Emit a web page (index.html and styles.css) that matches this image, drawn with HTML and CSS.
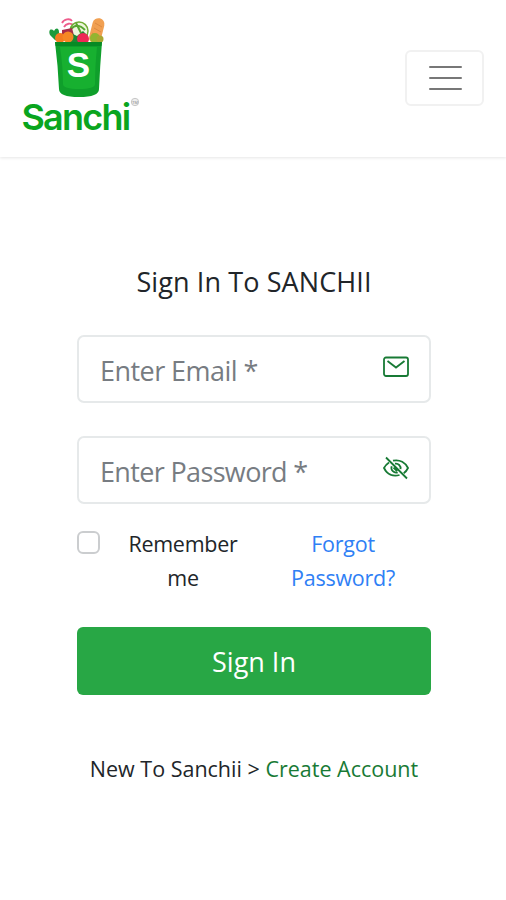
FILE: index.html
```
<!DOCTYPE html>
<html lang="en">
<head>
    <meta charset="UTF-8">
    <meta name="viewport" content="width=device-width, initial-scale=1">
    <title>Sign In</title>
    <link rel="stylesheet" href="styles.css">
</head>
<body>
<header class="navbar">
    <a href="#" class="logo">
        <svg width="122" height="130" viewBox="20 15 122 130">
            <!-- groceries -->
            <path d="M50 35c-2-5 1-7 4-4 2-4 5-3 5 1l1 10-5-2z" fill="#1d9a3c"/>
            <path d="M62 23c2-4 8-5 10-2M64 27c2-4 7-4 9-2" fill="none" stroke="#ee5c8c" stroke-width="1.8"/>
            <circle cx="79" cy="31" r="9" fill="#eef6dc" stroke="#72ad35" stroke-width="1.5"/>
            <path d="M71 29q6-7 14 1M76 23l5 10" fill="none" stroke="#58a632" stroke-width="2"/>
            <rect x="91" y="18" width="12" height="26" rx="6" transform="rotate(14 97 30)" fill="#f1a052"/>
            <path d="M95 23l7 4M94 28l7 4M92 33l7 4" stroke="#dd8a42" stroke-width="1"/>
            <path d="M62 30l10-2 3 11H62z" fill="#a92b48"/>
            <path d="M71 33l6 3 6-5 5 5-2 6H70z" fill="#1c8735"/>
            <circle cx="60" cy="38" r="5" fill="#f47b20"/>
            <circle cx="68" cy="37" r="5.500" fill="#f68725"/>
            <circle cx="83" cy="39" r="6" fill="#ee2856"/>
            <circle cx="95" cy="38" r="5" fill="#93b530"/>
            <circle cx="100" cy="39" r="3.500" fill="#a9a832"/>
            <!-- bag -->
            <path d="M55 42h47q-2 24-3 47 0 8-20 8t-20-8q-1-23-4-47z" fill="#0f9f2b"/>
            <path d="M60 47h37q-2 20-2 37 0 5-16 5t-16-5q0-17-3-37z" fill="#17b030"/>
            <path d="M55 42h47l-.6 4H55.600z" fill="#078a24"/>
            <text x="78.500" y="77" class="logo-letter">S</text>
            <text x="21.500" y="130" class="logo-name">Sanchi</text>
            <circle cx="135" cy="102" r="3.700" fill="#eee" stroke="#bbb" stroke-width=".8"/>
            <text x="135" y="103.500" class="logo-mark">TM</text>
        </svg>
    </a>
    <button type="button" class="navbar-toggler">
        <span class="bar"></span>
        <span class="bar"></span>
        <span class="bar"></span>
    </button>
</header>
<main class="signin">
    <h1 class="title">Sign In To SANCHII</h1>
    <form class="signin-form">
        <div class="field">
            <input type="email" class="field-input" placeholder="Enter Email *">
            <svg class="field-icon" width="26" height="26" viewBox="0 0 26 26">
                <rect x="1" y="3.500" width="24" height="18.500" rx="2"/>
                <path d="M4.500 7l8.500 6.500L21.500 7"/>
            </svg>
        </div>
        <div class="field">
            <input type="password" class="field-input password" placeholder="Enter Password *">
            <svg class="field-icon" width="26" height="26" viewBox="0 0 26 26">
                <path d="M10 5.700c7-1.600 12.500 2 15 7.300q-1.500 3.200-4.300 5.200M6 7.500Q2.600 9.800 1 13c3 6.300 9 8.900 15.500 7"/>
                <path d="M12 8.700a4.700 4.700 0 0 1 5.500 5.500M8.700 11.300a4.700 4.700 0 0 0 6 6M10.500 12.700l3.500 3.500M3 2.500l21 21"/>
            </svg>
        </div>
        <div class="options">
            <input type="checkbox" id="remember" class="check">
            <label for="remember" class="remember">Remember me</label>
            <a href="#" class="forgot">Forgot Password?</a>
        </div>
        <button type="button" class="btn">Sign In</button>
    </form>
    <p class="create">New To Sanchii &gt; <a href="#" class="create-link">Create Account</a></p>
</main>
</body>
</html>
```
FILE: styles.css
```
*{
    box-sizing: border-box;
}
body{
    margin: 0;
    background: #fff;
    color: #212529;
    font-family: "Open Sans", "Noto Sans", sans-serif;
}
a{
    text-decoration: none;
}
.navbar{
    display: flex;
    align-items: flex-start;
    justify-content: space-between;
    height: 157px;
    padding: 15px 22px 0 20px;
    box-shadow: 0 1px 3px rgba(0,0,0,.1);
}
.logo svg{
    display: block;
    overflow: visible;
}
.logo-letter{
    font: bold 35px "Liberation Sans", sans-serif;
    fill: #fff;
    text-anchor: middle;
}
.logo-name{
    font: 600 36px Inter, "Liberation Sans", sans-serif;
    letter-spacing: -1.8px;
    fill: #0aa51e;
}
.logo-mark{
    font: 4px "Liberation Sans", sans-serif;
    fill: #888;
    text-anchor: middle;
}
.navbar-toggler{
    display: flex;
    flex-direction: column;
    align-items: center;
    justify-content: center;
    gap: 9px;
    width: 79px;
    height: 56px;
    margin-top: 35px;
    padding: 0 0 0 1px;
    border: 2px solid #f1f1f1;
    border-radius: 6px;
    background: #fff;
}
.bar{
    width: 33px;
    height: 2px;
    border-radius: 1px;
    background: #777;
}
.signin{
    width: 354px;
    margin: 0 75px 0 77px;
    padding-top: 105px;
}
.title{
    margin: 0 0 33px;
    font-size: 27px;
    font-weight: 400;
    line-height: 40px;
    letter-spacing: .1px;
    text-align: center;
    white-space: nowrap;
}
.field{
    display: flex;
    align-items: center;
    height: 68px;
    margin-bottom: 33px;
    padding: 0 20px 0 21px;
    border: 2px solid #e6e9ea;
    border-radius: 7px;
}
.field-input{
    flex: 1;
    min-width: 0;
    height: 60px;
    padding: 2px 0 0;
    border: 0;
    outline: 0;
    background: none;
    color: #495057;
    font-family: inherit;
    font-size: 27px;
    letter-spacing: -.55px;
}
.password{
    letter-spacing: -.65px;
}
.field-input::placeholder{
    color: #777c82;
}
.field-icon{
    margin-bottom: 4px;
    fill: none;
    stroke: #187a35;
    stroke-width: 1.8;
}
.options{
    display: flex;
    align-items: flex-start;
    margin-top: -10px;
    font-size: 21.500px;
    line-height: 34px;
    letter-spacing: -.25px;
    text-align: center;
}
.check{
    appearance: none;
    width: 23px;
    height: 23px;
    margin: 4px 22px 0 0;
    border: 2px solid #cbcdcf;
    border-radius: 6px;
}
.remember{
    width: 122px;
}
.forgot{
    width: 122px;
    margin-left: 38px;
    color: #2f80f5;
}
.btn{
    display: block;
    width: 100%;
    height: 68px;
    margin-top: 32px;
    padding: 1px 0 0;
    border: 0;
    border-radius: 6px;
    background: #28a745;
    color: #fff;
    font-family: inherit;
    font-size: 27px;
}
.create{
    margin: 57px 0 0;
    font-size: 21.500px;
    line-height: 34px;
    text-align: center;
    white-space: nowrap;
}
.create-link{
    color: #187a35;
}
```
